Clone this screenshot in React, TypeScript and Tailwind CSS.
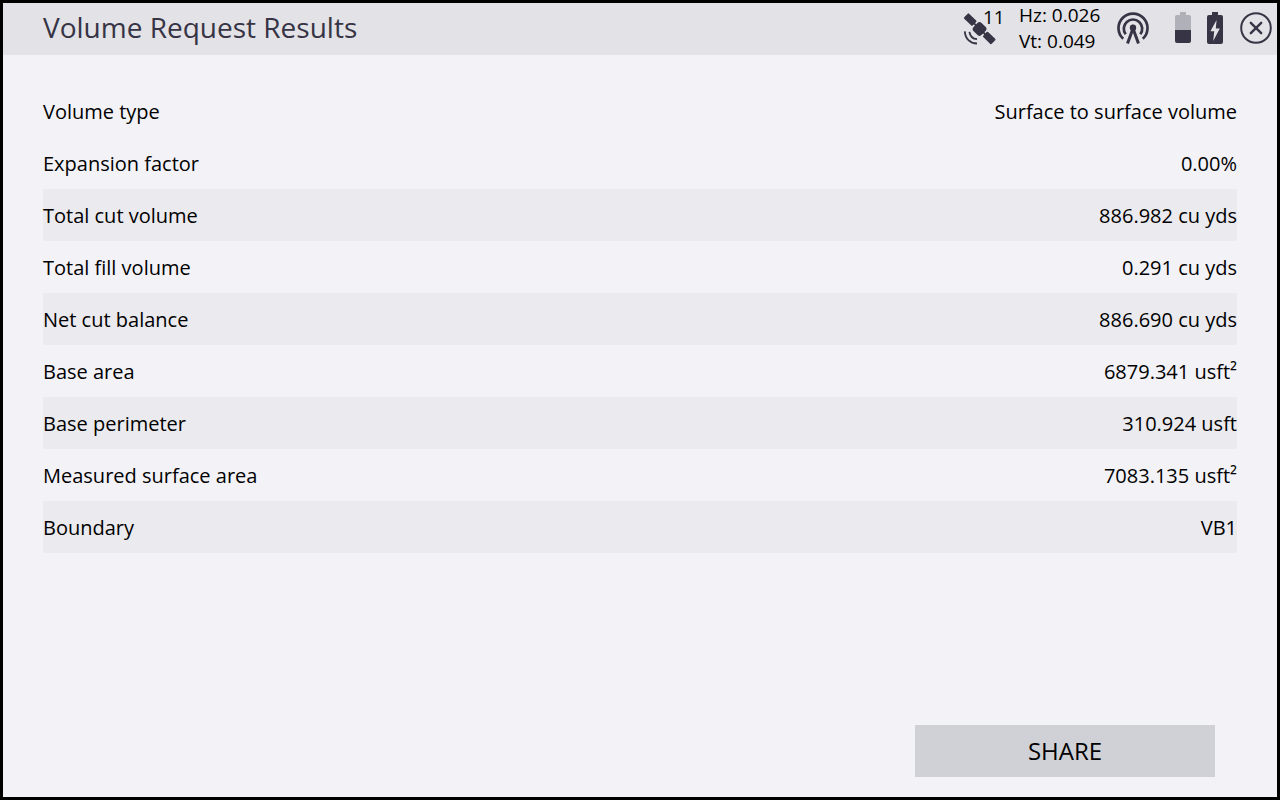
import React from 'react'

const results = [
  { label: 'Volume type', value: 'Surface to surface volume' },
  { label: 'Expansion factor', value: '0.00%' },
  { label: 'Total cut volume', value: '886.982 cu yds', shaded: true },
  { label: 'Total fill volume', value: '0.291 cu yds' },
  { label: 'Net cut balance', value: '886.690 cu yds', shaded: true },
  { label: 'Base area', value: '6879.341 usft²' },
  { label: 'Base perimeter', value: '310.924 usft', shaded: true },
  { label: 'Measured surface area', value: '7083.135 usft²' },
  { label: 'Boundary', value: 'VB1', shaded: true },
]

const SatelliteIcon = () => (
  <svg viewBox="0 -1 34 34" className="h-[34px] w-[34px]" fill="currentColor" aria-hidden="true">
    <g transform="rotate(44 16.5 17)">
      <rect x="-2.6" y="13.2" width="11.8" height="7" rx="1" />
      <rect x="10.8" y="11.2" width="11.4" height="11.4" rx="3" />
      <rect x="23.8" y="13.2" width="11.8" height="7" rx="1" />
      <path d="M8 16.8h17" stroke="currentColor" strokeWidth="1.8" />
    </g>
    <g fill="none" stroke="currentColor" strokeWidth="1.8">
      <path d="M1.8 19.4C2.2 26.6 7 31.2 14 31.5" />
      <path d="M6.4 19.8C7 24 9.8 26.8 14 27.2" />
    </g>
  </svg>
)

const AntennaIcon = () => (
  <svg viewBox="0 0 32 32" className="h-8 w-8" fill="none" stroke="currentColor" aria-hidden="true">
    <path d="M6.2 26.8A14.5 14.5 0 1 1 25.8 26.8" strokeWidth="2.7" />
    <path d="M8.7 22.3A9.2 9.2 0 1 1 23.3 22.3" strokeWidth="2.7" />
    <path d="M10.5 31.5L16 16.5L21.5 31.5" strokeWidth="3" />
    <circle cx="16" cy="15.8" r="3.2" fill="currentColor" stroke="none" />
  </svg>
)

const BatteryHalfIcon = () => (
  <svg viewBox="0 0 16 32" className="h-8 w-4" fill="currentColor" aria-hidden="true">
    <path
      d="M5 0h6v3h3a2 2 0 0 1 2 2v14H0V5a2 2 0 0 1 2-2h3z"
      className="text-[#b0b0b8]"
    />
    <path d="M0 18h16v11a2 2 0 0 1-2 2H2a2 2 0 0 1-2-2z" />
  </svg>
)

const BatteryChargingIcon = () => (
  <svg viewBox="0 0 16 32" className="h-8 w-4" aria-hidden="true">
    <path
      d="M5 0h6v3h3a2 2 0 0 1 2 2v25a2 2 0 0 1-2 2H2a2 2 0 0 1-2-2V5a2 2 0 0 1 2-2h3z"
      fill="currentColor"
    />
    <path d="M9.6 8L3.4 19.2H7.2L6.2 29L12.8 16.4H8.8z" fill="#e3e2e6" />
  </svg>
)

const CloseIcon = () => (
  <svg viewBox="0 0 32 32" className="h-8 w-8" fill="none" stroke="currentColor" aria-hidden="true">
    <circle cx="16" cy="16" r="14.8" strokeWidth="2" />
    <path d="M10.8 10.8L21.2 21.2M21.2 10.8L10.8 21.2" strokeWidth="2.4" strokeLinecap="round" />
  </svg>
)

const StatusBar = () => (
  <div className="flex h-[50px] items-center text-[#363445]">
    <div className="flex h-[50px] w-14 items-center">
      <SatelliteIcon />
      <span className="-ml-3.5 self-start text-[19px] leading-7 text-black">11</span>
    </div>
    <div className="w-[98px] text-[19px] leading-[26px] text-black">
      <p>Hz: 0.026</p>
      <p>Vt: 0.049</p>
    </div>
    <AntennaIcon />
    <div className="ml-[26px] flex gap-4">
      <BatteryHalfIcon />
      <BatteryChargingIcon />
    </div>
    <button type="button" aria-label="Close" className="ml-[17px]">
      <CloseIcon />
    </button>
  </div>
)

const App = () => (
  <div className="flex min-h-screen flex-col border-3 border-black bg-[#f3f2f7] font-['Open_Sans','Noto_Sans',sans-serif] text-black">
    <header className="flex h-[52px] items-start justify-between bg-[#e3e2e6] pr-[5px] pl-10">
      <h1 className="text-[28px] leading-[48px] text-[#363445]">Volume Request Results</h1>
      <StatusBar />
    </header>

    <main className="flex-1 px-10 pt-[30px]">
      <table className="w-full text-[20px] leading-7">
        <tbody>
          {results.map((row) => (
            <tr key={row.label} className={row.shaded ? 'h-[52px] bg-[#ebeaee]' : 'h-[52px]'}>
              <th scope="row" className="p-0 pt-0.5 text-left font-normal">
                {row.label}
              </th>
              <td className="p-0 pt-0.5 text-right">{row.value}</td>
            </tr>
          ))}
        </tbody>
      </table>
    </main>

    <footer className="flex justify-end pr-[62px] pb-5">
      <button type="button" className="h-[52px] w-[300px] bg-[#d0d1d6] text-[24px]">
        SHARE
      </button>
    </footer>
  </div>
)

export default App
